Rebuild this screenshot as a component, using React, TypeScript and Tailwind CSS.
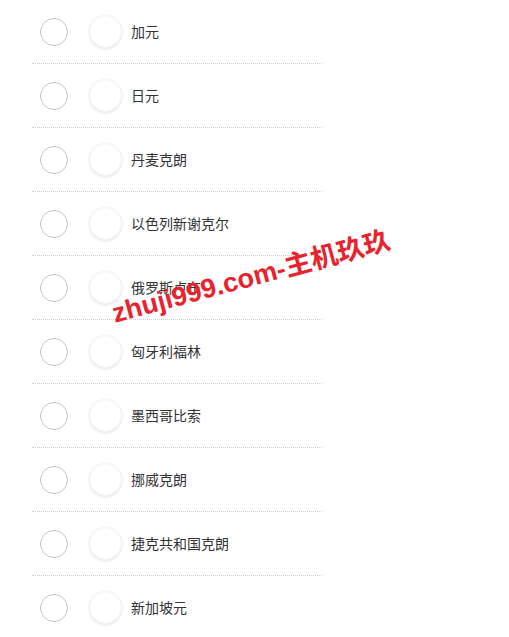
const currencies = [
  "加元",
  "日元",
  "丹麦克朗",
  "以色列新谢克尔",
  "俄罗斯卢布",
  "匈牙利福林",
  "墨西哥比索",
  "挪威克朗",
  "捷克共和国克朗",
  "新加坡元",
];

function CurrencyRow({ name }: { name: string }) {
  return (
    <div className="flex h-16 items-center border-b border-dotted border-[#cfcfcf] pl-2">
      <span className="size-7 shrink-0 rounded-full border border-[#c4c4c4] bg-white" />
      <span className="ml-[21px] size-[33px] shrink-0 rounded-full border border-[#f3f3f3] bg-white shadow-[0_1px_3px_rgba(0,0,0,0.1)]" />
      <span className="ml-[9px] text-sm text-[#333]">{name}</span>
    </div>
  );
}

export default function App() {
  return (
    <div className="relative min-h-[637px] bg-white font-['Liberation_Sans','Noto_Sans_CJK_SC',sans-serif]">
      <div className="ml-8 w-[290px]">
        {currencies.map((name) => (
          <CurrencyRow key={name} name={name} />
        ))}
      </div>
      <div className="pointer-events-none absolute left-[108px] top-[264px] origin-center -rotate-[15deg] whitespace-nowrap text-[27px] font-bold leading-none text-[#e8232d]">
        zhuji999.com-主机玖玖
      </div>
    </div>
  );
}
